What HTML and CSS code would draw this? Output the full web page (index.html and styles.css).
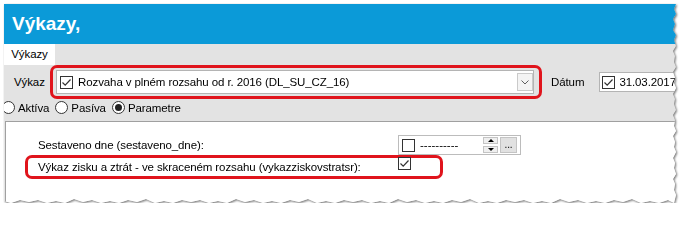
FILE: index.html
```html
<!DOCTYPE html>
<html lang="sk">
<head>
<meta charset="utf-8">
<title>Výkazy</title>
<link rel="stylesheet" href="styles.css">
</head>
<body>
<div class="frame">
  <div class="window">
    <div class="titlebar">Výkazy,</div>
    <div class="tabs"><div class="tab">Výkazy</div></div>
    <div class="toolbar">
      <span class="lbl-vykaz">Výkaz</span>
      <div class="hl hl-combo">
        <div class="combo">
          <span class="chk"><svg viewBox="0 0 11 11" width="11" height="11"><polyline points="1.5,5.5 4.2,8.2 9.5,2.5" fill="none" stroke="#333" stroke-width="1.2"/></svg></span>
          <span class="combo-text">Rozvaha v plném rozsahu od r. 2016 (DL_SU_CZ_16)</span>
          <span class="drop"><svg viewBox="0 0 8 5" width="8" height="5"><polyline points="0.5,0.5 4,4 7.5,0.5" fill="none" stroke="#606060" stroke-width="1"/></svg></span>
        </div>
      </div>
      <span class="lbl-datum">Dátum</span>
      <div class="datebox">
        <span class="chk"><svg viewBox="0 0 11 11" width="11" height="11"><polyline points="1.5,5.5 4.2,8.2 9.5,2.5" fill="none" stroke="#333" stroke-width="1.2"/></svg></span>
        <span>31.03.2017</span>
      </div>
    </div>
    <div class="radios">
      <label class="radio"><span class="dot"></span>Aktíva</label>
      <label class="radio"><span class="dot"></span>Pasíva</label>
      <label class="radio"><span class="dot on"></span>Parametre</label>
    </div>
    <div class="panel">
      <div class="prow">
        <span class="plabel">Sestaveno dne (sestaveno_dne):</span>
        <div class="dtp">
          <span class="chk"></span>
          <span class="dashes">----------</span>
          <span class="spin"><span class="up"><i></i></span><span class="down"><i></i></span></span>
          <span class="ellipsis">...</span>
        </div>
      </div>
      <div class="hl hl-row">
        <span class="plabel">Výkaz zisku a ztrát - ve skraceném rozsahu (vykazziskovstratsr):</span>
        <span class="chk chk-row"><svg viewBox="0 0 11 11" width="11" height="11"><polyline points="1.5,5.5 4.2,8.2 9.5,2.5" fill="none" stroke="#333" stroke-width="1.2"/></svg></span>
      </div>
    </div>
  </div>
</div>
</body>
</html>
```

FILE: styles.css
```css
* { box-sizing: border-box; }
html, body { margin: 0; padding: 0; background: #fff; }
body {
  font-family: "Liberation Sans", Arial, sans-serif;
  font-size: 11.5px;
  letter-spacing: -0.1px;
  color: #000;
}
.frame {
  padding: 4px 0 0 4px;
  width: fit-content;
  filter: drop-shadow(1px 1px 1px rgba(0, 0, 0, 0.55));
}
.window {
  width: 672px;
  height: 199px;
  display: flex;
  flex-direction: column;
  background: #e3e3e3;
  clip-path: polygon(0 0, 672px 0, 670px 5px, 672px 10px, 669px 15px, 671px 20px, 669px 26px, 672px 31px, 670px 36px, 672px 42px, 669px 47px, 671px 52px, 670px 58px, 672px 63px, 669px 68px, 671px 74px, 670px 79px, 672px 84px, 669px 90px, 671px 95px, 670px 100px, 672px 106px, 669px 111px, 671px 116px, 670px 122px, 672px 127px, 669px 132px, 671px 138px, 670px 143px, 672px 148px, 669px 154px, 671px 159px, 670px 164px, 672px 170px, 669px 175px, 671px 180px, 670px 186px, 672px 191px, 670px 199px,
    664px 196px, 655px 199px, 646px 197px, 637px 199px, 628px 195px, 619px 198px, 610px 196px, 601px 199px, 592px 197px, 583px 199px, 574px 196px, 565px 198px, 556px 195px, 547px 199px, 538px 197px, 529px 199px, 520px 196px, 511px 198px, 502px 196px, 493px 199px, 484px 197px, 475px 199px, 466px 195px, 457px 198px, 448px 196px, 439px 199px, 430px 197px, 421px 199px, 412px 196px, 403px 198px, 394px 195px, 385px 199px, 376px 197px, 367px 199px, 358px 196px, 349px 198px, 340px 196px, 331px 199px, 322px 197px, 313px 199px, 304px 195px, 295px 198px, 286px 196px, 277px 199px, 268px 197px, 259px 199px, 250px 196px, 241px 198px, 232px 195px, 223px 199px, 214px 197px, 205px 199px, 196px 196px, 187px 198px, 178px 196px, 169px 199px, 160px 197px, 151px 199px, 142px 195px, 133px 198px, 124px 196px, 115px 199px, 106px 197px, 97px 199px, 88px 196px, 79px 198px, 70px 195px, 61px 199px, 52px 197px, 43px 199px, 34px 196px, 25px 198px, 16px 196px, 7px 199px, 0 197px);
}
.titlebar {
  flex: none;
  height: 40px;
  background: #0b9ad8;
  color: #fff;
  font-weight: bold;
  font-size: 19px;
  letter-spacing: 0;
  line-height: 40px;
  padding-left: 8px;
}
.tabs { flex: none; height: 21px; display: flex; }
.tab {
  background: #fff;
  width: 51px;
  text-align: center;
  line-height: 21px;
}
.toolbar { flex: none; height: 34px; display: flex; align-items: center; }
.lbl-vykaz { width: 46px; padding-left: 10px; flex: none; }
.hl { border: 3px solid #e0141c; border-radius: 7px; }
.hl-combo {
  flex: none;
  width: 492px;
  height: 34px;
  padding: 2px 0 2px 3px;
}
.combo {
  width: 478px;
  height: 24px;
  background: #fff;
  border: 1px solid #b4b4b4;
  display: flex;
  align-items: center;
  padding-left: 3px;
}
.combo .chk { margin-right: 5px; }
.combo-text { flex: 1; }
.drop {
  width: 16px;
  height: 18px;
  border: 1px solid #cacaca;
  background: #f4f4f4;
  display: flex;
  align-items: center;
  justify-content: center;
}
.lbl-datum { margin-left: 9px; flex: none; }
.datebox {
  flex: none;
  margin-left: 15px;
  width: 90px;
  height: 20px;
  background: #fff;
  border: 1px solid #b4b4b4;
  display: flex;
  align-items: center;
  padding-left: 2px;
  gap: 4px;
}
.chk {
  flex: none;
  width: 13px;
  height: 13px;
  border: 1px solid #333;
  background: #fff;
  display: inline-flex;
  align-items: center;
  justify-content: center;
}
.radios {
  flex: none;
  height: 17px;
  display: flex;
  align-items: center;
  gap: 6px;
  margin-left: -2px;
}
.radio { display: flex; align-items: center; gap: 3px; }
.dot {
  width: 13px;
  height: 13px;
  border: 1px solid #333;
  border-radius: 50%;
  background: #fff;
  display: flex;
  align-items: center;
  justify-content: center;
}
.dot.on::after {
  content: "";
  width: 7px;
  height: 7px;
  border-radius: 50%;
  background: #222;
}
.panel {
  flex: 1;
  margin-top: 5px;
  margin-left: 1px;
  background: #fff;
  border-top: 1px solid #a0a0a0;
  border-left: 1px solid #a0a0a0;
  padding-top: 13px;
}
.prow { display: flex; align-items: center; height: 20px; padding-left: 32px; }
.plabel { flex: none; width: 360px; }
.dtp {
  flex: none;
  width: 123px;
  height: 20px;
  border: 1px solid #bcbcbc;
  display: flex;
  align-items: center;
  padding-left: 3px;
}
.dashes { margin-left: 5px; letter-spacing: 0; }
.spin { margin-left: auto; display: flex; flex-direction: column; gap: 2px; }
.spin > span {
  width: 15px;
  height: 7px;
  border: 1px solid #c4c4c4;
  background: #efefef;
  display: flex;
  align-items: center;
  justify-content: center;
}
.spin i { width: 0; height: 0; border-left: 3px solid transparent; border-right: 3px solid transparent; }
.up i { border-bottom: 3px solid #000; }
.down i { border-top: 3px solid #000; }
.ellipsis {
  width: 17px;
  height: 16px;
  margin-left: 2px;
  margin-right: 3px;
  background: #e1e1e1;
  border: 1px solid #c4c4c4;
  font-size: 10px;
  line-height: 14px;
  text-align: center;
}
.hl-row {
  margin-left: 19px;
  width: 418px;
  height: 24px;
  display: flex;
  align-items: center;
}
.hl-row .plabel { width: 370px; padding-left: 10px; }
.chk-row { align-self: flex-start; margin-top: -1px; }
```
